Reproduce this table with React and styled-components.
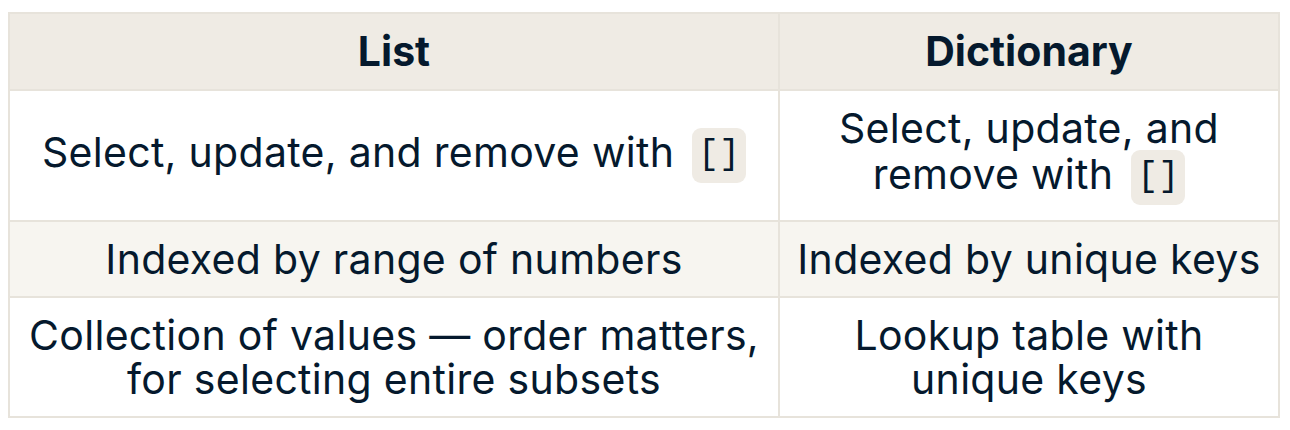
import React from "react";
import styled, { createGlobalStyle } from "styled-components";

const Global = createGlobalStyle`
  html, body { margin: 0; padding: 0; background: #ffffff; }
  body { font-family: Inter, "Noto Sans", sans-serif; color: #05192d; }
`;

const Page = styled.div`
  padding: 12px 12px 0 8px;
`;

const Table = styled.table`
  width: 1270px;
  border-collapse: collapse;
  table-layout: fixed;
  border: 2px solid #e7e3db;
`;

const Col = styled.col`
  width: ${(p) => p.$w}px;
`;

const HeadCell = styled.th`
  background: #efebe4;
  border: 2px solid #e7e3db;
  padding: 15px 12px 16px;
  font-size: 41px;
  font-weight: 700;
  text-align: center;
  line-height: 44px;
`;

const Row = styled.tr`
  background: ${(p) => (p.$alt ? "#f7f5f0" : "#ffffff")};
`;

const Cell = styled.td`
  border: 2px solid #e7e3db;
  padding: 15px 12px;
  font-size: 41px;
  font-weight: 400;
  line-height: 44px;
  letter-spacing: 0.3px;
  text-align: center;
`;

const Code = styled.code`
  display: inline-block;
  font-family: "Liberation Mono", "DejaVu Sans Mono", monospace;
  font-size: 35px;
  line-height: 41px;
  letter-spacing: 0;
  padding: 7px 6px;
  margin-left: 6px;
  background: #efebe4;
  border-radius: 9px;
  vertical-align: middle;
`;

export default function App() {
  return (
    <Page>
      <Global />
      <Table>
        <colgroup>
          <Col $w={770} />
          <Col $w={500} />
        </colgroup>
        <thead>
          <tr>
            <HeadCell>List</HeadCell>
            <HeadCell>Dictionary</HeadCell>
          </tr>
        </thead>
        <tbody>
          <Row>
            <Cell>
              Select, update, and remove with <Code>[]</Code>
            </Cell>
            <Cell>
              Select, update, and remove with <Code>[]</Code>
            </Cell>
          </Row>
          <Row $alt>
            <Cell>Indexed by range of numbers</Cell>
            <Cell>Indexed by unique keys</Cell>
          </Row>
          <Row>
            <Cell>
              Collection of values — order matters, for selecting entire subsets
            </Cell>
            <Cell>Lookup table with unique keys</Cell>
          </Row>
        </tbody>
      </Table>
    </Page>
  );
}
